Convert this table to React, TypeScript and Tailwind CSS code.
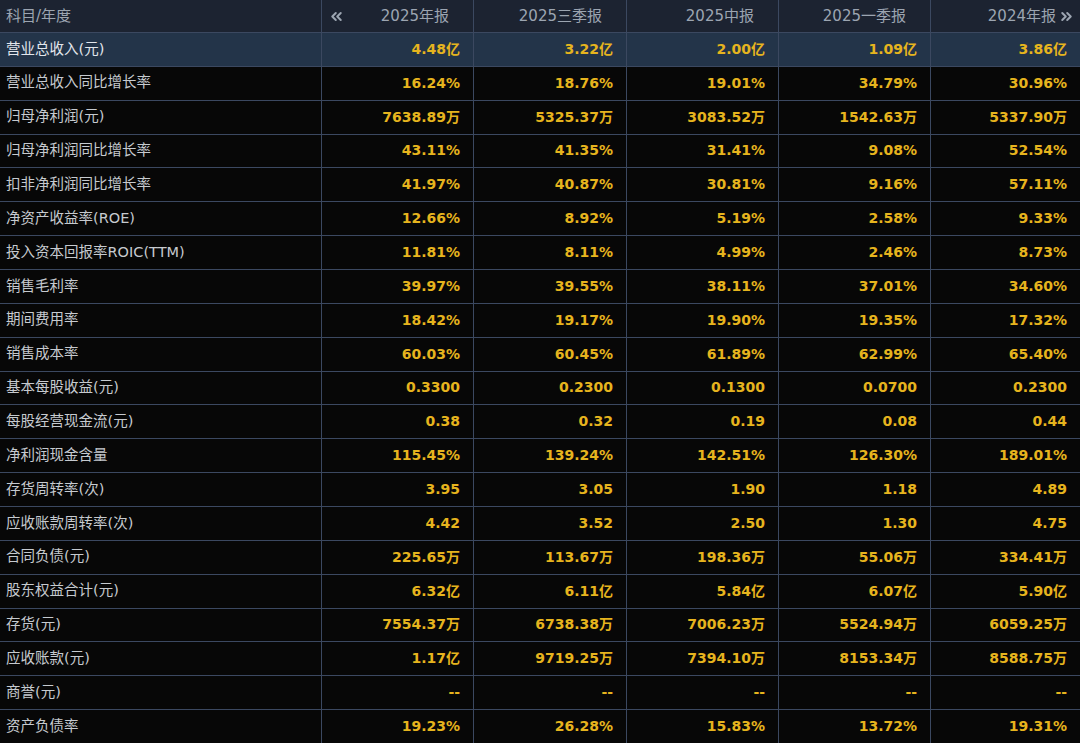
import { ChevronsLeft, ChevronsRight } from "lucide-react";

const PERIODS = ["2025年报", "2025三季报", "2025中报", "2025一季报", "2024年报"];

const ROWS: [string, string[]][] = [
  ["营业总收入(元)", ["4.48亿", "3.22亿", "2.00亿", "1.09亿", "3.86亿"]],
  ["营业总收入同比增长率", ["16.24%", "18.76%", "19.01%", "34.79%", "30.96%"]],
  ["归母净利润(元)", ["7638.89万", "5325.37万", "3083.52万", "1542.63万", "5337.90万"]],
  ["归母净利润同比增长率", ["43.11%", "41.35%", "31.41%", "9.08%", "52.54%"]],
  ["扣非净利润同比增长率", ["41.97%", "40.87%", "30.81%", "9.16%", "57.11%"]],
  ["净资产收益率(ROE)", ["12.66%", "8.92%", "5.19%", "2.58%", "9.33%"]],
  ["投入资本回报率ROIC(TTM)", ["11.81%", "8.11%", "4.99%", "2.46%", "8.73%"]],
  ["销售毛利率", ["39.97%", "39.55%", "38.11%", "37.01%", "34.60%"]],
  ["期间费用率", ["18.42%", "19.17%", "19.90%", "19.35%", "17.32%"]],
  ["销售成本率", ["60.03%", "60.45%", "61.89%", "62.99%", "65.40%"]],
  ["基本每股收益(元)", ["0.3300", "0.2300", "0.1300", "0.0700", "0.2300"]],
  ["每股经营现金流(元)", ["0.38", "0.32", "0.19", "0.08", "0.44"]],
  ["净利润现金含量", ["115.45%", "139.24%", "142.51%", "126.30%", "189.01%"]],
  ["存货周转率(次)", ["3.95", "3.05", "1.90", "1.18", "4.89"]],
  ["应收账款周转率(次)", ["4.42", "3.52", "2.50", "1.30", "4.75"]],
  ["合同负债(元)", ["225.65万", "113.67万", "198.36万", "55.06万", "334.41万"]],
  ["股东权益合计(元)", ["6.32亿", "6.11亿", "5.84亿", "6.07亿", "5.90亿"]],
  ["存货(元)", ["7554.37万", "6738.38万", "7006.23万", "5524.94万", "6059.25万"]],
  ["应收账款(元)", ["1.17亿", "9719.25万", "7394.10万", "8153.34万", "8588.75万"]],
  ["商誉(元)", ["--", "--", "--", "--", "--"]],
  ["资产负债率", ["19.23%", "26.28%", "15.83%", "13.72%", "19.31%"]],
];

const font = "font-['DejaVu_Sans','Noto_Sans_CJK_SC',sans-serif]";

export default function App() {
  return (
    <div
      className={`grid h-[743px] w-[1080px] grid-cols-[321px_151px_152px_151px_151px_149px] grid-rows-[32px_repeat(21,minmax(0,1fr))] gap-px bg-[#3b4860] ${font}`}
    >
      <div className="flex items-center bg-[#1c2331] pl-[6px] text-[15px] text-[#9ca5b1]">科目/年度</div>
      {PERIODS.map((p, i) => (
        <div
          key={p}
          className="relative flex items-center justify-end bg-[#1c2331] pr-[24px] text-[15px] text-[#9ca5b1]"
        >
          {i === 0 && (
            <ChevronsLeft className="absolute left-[6px] top-[8px] h-[17px] w-[17px]" strokeWidth={2.8} />
          )}
          {p}
          {i === PERIODS.length - 1 && (
            <ChevronsRight className="absolute right-[5px] top-[8px] h-[17px] w-[17px]" strokeWidth={2.8} />
          )}
        </div>
      ))}
      {ROWS.map(([label, vals], r) => {
        const hl = r === 0;
        const bg = hl ? "bg-[#233449]" : "bg-[#070707]";
        return [
          <div
            key={label}
            className={`flex items-center pl-[6px] text-[14.5px] ${bg} ${hl ? "text-[#e2e6ec]" : "text-[#c6cacf]"}`}
          >
            {label}
          </div>,
          ...vals.map((v, c) => (
            <div
              key={label + c}
              className={`flex items-center justify-end pr-[13px] text-[14px] font-bold text-[#e6b41e] ${bg}`}
            >
              {v}
            </div>
          )),
        ];
      })}
    </div>
  );
}
